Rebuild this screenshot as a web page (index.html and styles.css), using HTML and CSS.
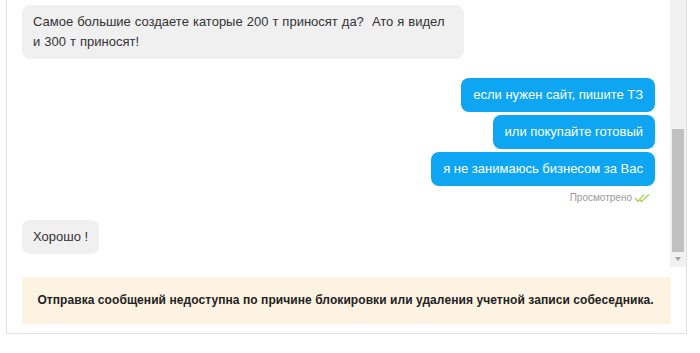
FILE: index.html
```html
<!DOCTYPE html>
<html>
    <head>
        <title>Диалог</title>
        <link rel="stylesheet" href="styles.css">
    </head>
    <body>
        <div class="dialog">
            <div class="scroll">
                <div class="messages">
                    <div class="group in">
                        <div class="bubble wide">Самое большие создаете каторые 200 т приносят да?&nbsp; Ато я видел и 300 т приносят!</div>
                    </div>

                    <div class="group out">
                        <div class="bubble">если нужен сайт, пишите ТЗ</div>
                        <div class="bubble">или покупайте готовый</div>
                        <div class="bubble">я не занимаюсь бизнесом за Вас</div>
                        <div class="seen">Просмотрено
                            <svg width="18" height="10" viewBox="0 0 18 10">
                                <path d="M1 5 L4 8.5 L10 1.5" fill="none" stroke="#a8d25a" stroke-width="1.3"/>
                                <path d="M6 7 L7.5 8.5 L15 1.5" fill="none" stroke="#a8d25a" stroke-width="1.3"/>
                            </svg>
                        </div>
                    </div>

                    <div class="group in last">
                        <div class="bubble">Хорошо !</div>
                    </div>
                </div>
                <div class="scrollbar">
                    <div class="thumb"></div>
                    <div class="arrow"></div>
                </div>
            </div>
            <div class="notice">Отправка сообщений недоступна по причине блокировки или удаления учетной записи собеседника.</div>
        </div>
    </body>
</html>
```

FILE: styles.css
```css
body {
    margin: 0;
    background-color: white;
    font-family: "Liberation Sans", Arial, sans-serif;
    color: #333;
}

.dialog {
    margin-left: 6px;
    width: 679px;
    border: 1px solid #e2e2e2;
    border-top: none;
    padding-bottom: 9px;
}

.scroll {
    display: flex;
    height: 267px;
}

.messages {
    flex: 1;
    padding: 5px 15px 0 15px;
}

.group {
    display: flex;
    flex-direction: column;
    gap: 3px;
}

.group.in {
    align-items: flex-start;
}

.group.out {
    align-items: flex-end;
    margin-top: 19px;
}

.group.last {
    margin-top: 15px;
}

.bubble {
    font-size: 13px;
    line-height: 20px;
    padding: 7px 11px;
    border-radius: 8px;
    background-color: #f0f0f0;
    max-width: 420px;
}

.bubble.wide {
    width: 420px;
    max-width: 420px;
    padding-right: 11px;
    word-spacing: 0.4px;
}

.out .bubble {
    background-color: #0ea6f3;
    color: white;
    padding: 7px 12px;
}

.seen {
    display: flex;
    align-items: center;
    gap: 2px;
    margin-top: 2px;
    margin-right: 3px;
    font-size: 10px;
    line-height: 14px;
    color: #9a9a9a;
}

.scrollbar {
    width: 16px;
    background-color: #f1f1f1;
    position: relative;
}

.thumb {
    position: absolute;
    left: 2px;
    right: 2px;
    top: 129px;
    height: 123px;
    background-color: #c1c1c1;
}

.arrow {
    position: absolute;
    left: 5px;
    top: 257px;
    border-left: 3px solid transparent;
    border-right: 3px solid transparent;
    border-top: 4px solid #a3a3a3;
}

.notice {
    margin: 10px 15px 0 15px;
    height: 47px;
    line-height: 47px;
    background-color: #fdf3e2;
    text-align: center;
    font-size: 12px;
    font-weight: bold;
    color: #222;
    letter-spacing: 0.07px;
    padding-right: 2px;
}
```
